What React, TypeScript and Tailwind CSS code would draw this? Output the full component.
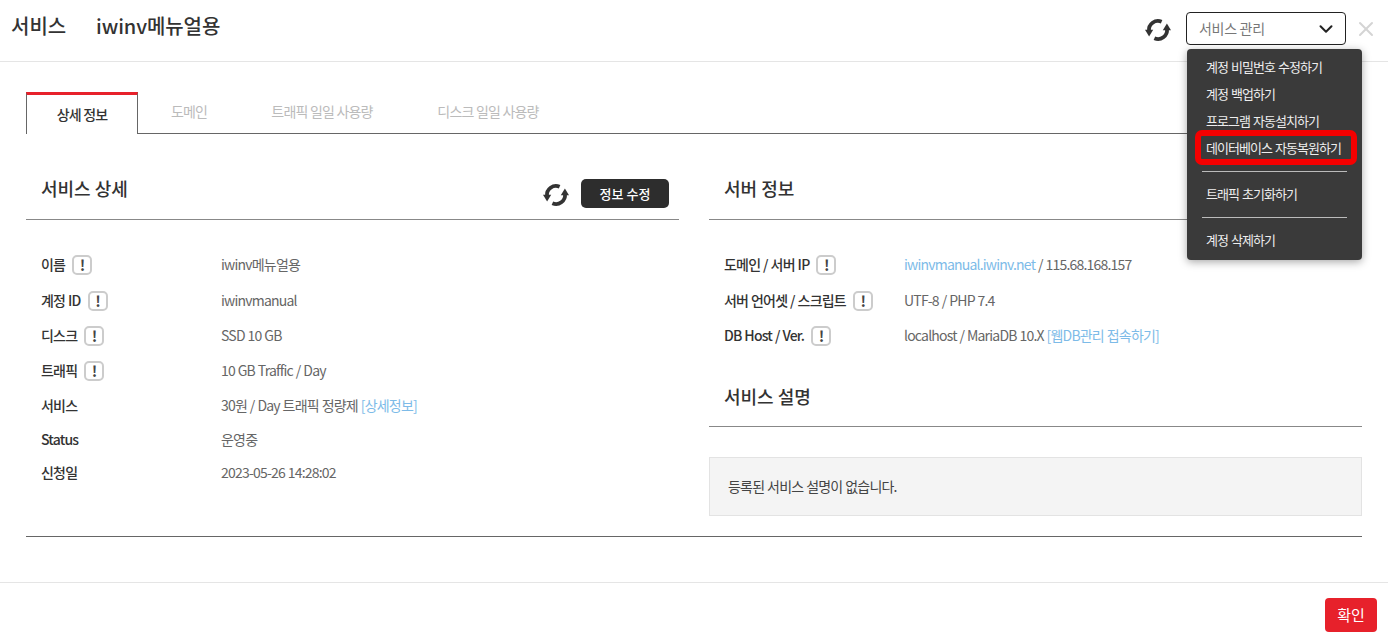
import { LuChevronDown, LuX } from 'react-icons/lu'

function RefreshIcon({ className }: { className?: string }) {
  const half = (
    <>
      <path d="M15.6 3.8A9 9 0 0 0 3 13" fill="none" stroke="currentColor" strokeWidth="3.8" />
      <path d="M-1 11.8H7.2L3.1 18.6Z" fill="currentColor" />
    </>
  )
  return (
    <svg viewBox="0 0 24 24" className={`overflow-visible ${className}`}>
      {half}
      <g transform="rotate(180 12 12)">{half}</g>
    </svg>
  )
}

function Info() {
  return (
    <span className="ml-[7px] inline-flex h-[20px] w-[20px] items-center justify-center rounded-[5px] border-2 border-[#cccccc] text-[15px] font-bold leading-none text-[#444]">
      !
    </span>
  )
}

function Row({ label, info, h, children }: { label: string; info?: boolean; h: string; children: React.ReactNode }) {
  return (
    <div className={`flex items-center text-[14px] tracking-[-0.8px] [word-spacing:0.5px] ${h}`}>
      <div className="flex w-[180px] shrink-0 items-center font-medium text-[#333]">
        {label}
        {info && <Info />}
      </div>
      <div className="text-[#666]">{children}</div>
    </div>
  )
}

const Lnk = ({ children }: { children: React.ReactNode }) => <span className="text-[#7dbbe8]">{children}</span>

export default function App() {
  return (
    <div className="relative h-[643px] w-[1388px] overflow-hidden bg-white font-['Noto_Sans_CJK_KR','Noto_Sans',sans-serif]">
      {/* header */}
      <header className="flex h-[62px] items-start border-b border-[#e5e5e5] pl-[11px] pr-[10px]">
        <h1 className="mt-[10px] w-[85px] text-[20px] font-medium leading-[32px] text-[#333]">서비스</h1>
        <h1 className="mt-[10px] text-[20px] font-medium leading-[32px] tracking-[-0.1px] text-[#333]">iwinv메뉴얼용</h1>
        <div className="ml-auto mt-[12px] flex items-center">
          <RefreshIcon className="mr-[16px] mt-[3px] h-[24px] w-[24px] text-[#333]" />
          <div className="flex h-[33px] w-[160px] items-center justify-between rounded-[4px] border border-[#222] pl-[12px] pr-[8px] text-[14px] tracking-[-0.3px] text-[#777]">
            서비스 관리
            <LuChevronDown className="text-[22px] text-[#222]" strokeWidth={2.2} />
          </div>
          <LuX className="ml-[8px] text-[24px] text-[#d4d4d4]" strokeWidth={2} />
        </div>
      </header>

      <main className="px-[26px] pt-[30px]">
        {/* tabs */}
        <div className="flex h-[42px] border-b border-[#666] text-[14px] tracking-[-0.8px] text-[#bbb]">
          <div className="flex h-[42px] w-[112px] items-center justify-center border-x border-t-[3px] border-x-[#666] border-t-[#e7212b] bg-white font-medium text-[#333]">
            상세 정보
          </div>
          <div className="flex w-[102px] items-center justify-center pb-[2px]">도메인</div>
          <div className="flex w-[164px] items-center justify-center pb-[2px]">트래픽 일일 사용량</div>
          <div className="flex w-[168px] items-center justify-center pb-[2px]">디스크 일일 사용량</div>
        </div>

        <div className="mt-[27px] flex gap-[30px]">
          {/* left */}
          <section className="w-[653px]">
            <div className="flex h-[59px] items-start justify-between border-b border-[#888] pl-[15px] pr-[10px]">
              <h2 className="mt-[11px] text-[18px] font-medium leading-[32px] text-[#333]">서비스 상세</h2>
              <div className="mt-[18px] flex items-center">
                <RefreshIcon className="mr-[13px] mt-[2px] h-[24px] w-[24px] text-[#333]" />
                <button className="h-[29px] w-[88px] rounded-[5px] bg-[#2d2d2d] text-[13px] font-medium text-white">
                  정보 수정
                </button>
              </div>
            </div>
            <div className="pl-[15px] pt-[26px]">
              <Row label="이름" info h="h-[37px]">iwinv메뉴얼용</Row>
              <Row label="계정 ID" info h="h-[35px]">iwinvmanual</Row>
              <Row label="디스크" info h="h-[35px]">SSD 10 GB</Row>
              <Row label="트래픽" info h="h-[35px]">10 GB Traffic / Day</Row>
              <Row label="서비스" h="h-[35px]">30원 / Day 트래픽 정량제 <Lnk>[상세정보]</Lnk></Row>
              <Row label="Status" h="h-[33px]">운영중</Row>
              <Row label="신청일" h="h-[33px]">2023-05-26 14:28:02</Row>
            </div>
          </section>

          {/* right */}
          <section className="w-[653px]">
            <div className="h-[59px] border-b border-[#888] pl-[15px] pt-[11px]">
              <h2 className="text-[18px] font-medium leading-[32px] text-[#333]">서버 정보</h2>
            </div>
            <div className="pl-[15px] pt-[26px]">
              <Row label="도메인 / 서버 IP" info h="h-[37px]"><Lnk>iwinvmanual.iwinv.net</Lnk> / 115.68.168.157</Row>
              <Row label="서버 언어셋 / 스크립트" info h="h-[35px]">UTF-8 / PHP 7.4</Row>
              <Row label="DB Host / Ver." info h="h-[35px]">localhost / MariaDB 10.X <Lnk>[웹DB관리 접속하기]</Lnk></Row>
            </div>
            <div className="mt-[27px] h-[47px] border-b border-[#888] pl-[15px]">
              <h2 className="text-[18px] font-medium leading-[32px] text-[#333]">서비스 설명</h2>
            </div>
            <div className="mt-[30px] flex h-[59px] items-center border border-[#e3e3e3] bg-[#f4f4f4] pl-[18px] text-[14px] tracking-[-0.8px] [word-spacing:0.5px] text-[#444]">
              등록된 서비스 설명이 없습니다.
            </div>
          </section>
        </div>

        <div className="mt-[20px] border-t border-[#666]" />
      </main>

      {/* footer */}
      <footer className="mt-[45px] flex justify-end border-t border-[#e5e5e5] pr-[11px] pt-[15px]">
        <button className="h-[34px] w-[52px] rounded-[4px] bg-[#e7212b] text-[15px] text-white">확인</button>
      </footer>

      {/* dropdown menu */}
      <div className="absolute left-[1187px] top-[49px] h-[211px] w-[175px] rounded-[4px] bg-[#3a3a3a] pl-[19px] text-[13px] leading-[27px] tracking-[-0.95px] [word-spacing:1px] text-[#eee] shadow-[0_2px_8px_rgba(0,0,0,0.35)]">
        <div className="pt-[4px]">
          <div>계정 비밀번호 수정하기</div>
          <div>계정 백업하기</div>
          <div>프로그램 자동설치하기</div>
          <div>데이터베이스 자동복원하기</div>
        </div>
        <div className="ml-[-4px] mr-[15px] mt-[10px] border-t border-[#bbb]" />
        <div className="mt-[8px]">트래픽 초기화하기</div>
        <div className="ml-[-4px] mr-[15px] mt-[10px] border-t border-[#bbb]" />
        <div className="mt-[8px]">계정 삭제하기</div>
      </div>
      <div className="absolute left-[1195px] top-[130px] h-[35px] w-[162px] rounded-[7px] border-[6px] border-[#f50000]" />
    </div>
  )
}
